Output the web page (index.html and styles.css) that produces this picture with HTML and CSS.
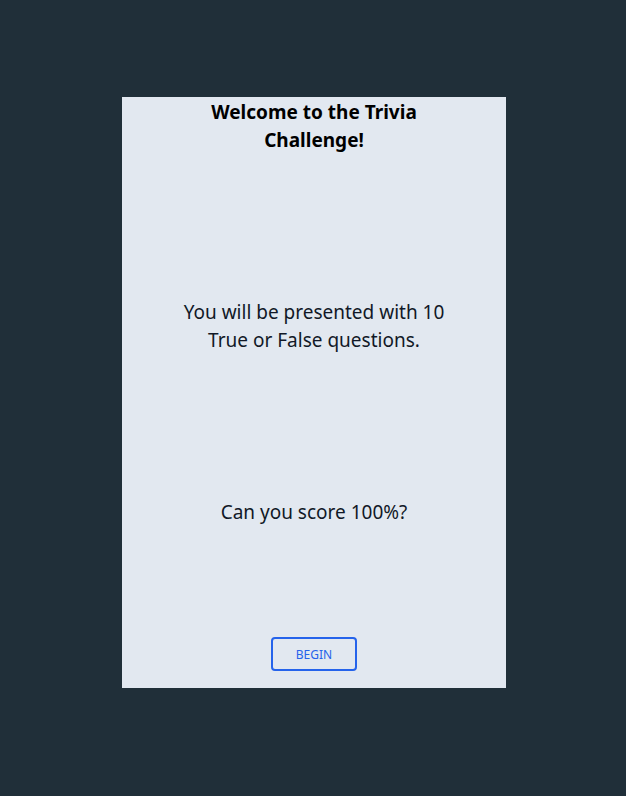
FILE: index.html
```html
<!DOCTYPE html>
<html>
<head>
<meta charset="utf-8">
<link rel="stylesheet" href="styles.css">
</head>
<body>
<main class="card">
  <h1 class="title">Welcome to the Trivia Challenge!</h1>
  <p class="text first">You will be presented with 10 True or False questions.</p>
  <p class="text second">Can you score 100%?</p>
  <button class="begin">BEGIN</button>
</main>
</body>
</html>
```
FILE: styles.css
```css
html, body {
  margin: 0;
  padding: 0;
  background: #202f39;
  height: 100%;
}
body {
  padding-top: 97px;
  box-sizing: border-box;
  font-family: "Noto Sans", "Open Sans", sans-serif;
}
.card {
  width: 384px;
  height: 591px;
  margin: 0 0 0 122px;
  padding-top: 1px;
  background: #e2e8f0;
  display: flex;
  flex-direction: column;
  align-items: center;
  box-sizing: border-box;
}
.title {
  margin: 0;
  width: 240px;
  font-size: 19px;
  line-height: 28px;
  font-weight: 700;
  text-align: center;
  color: #000;
}
.text {
  margin: 0;
  font-size: 19px;
  line-height: 28px;
  text-align: center;
  color: #111827;
}
.first {
  width: 280px;
  margin-top: 144px;
}
.second {
  margin-top: 144px;
}
.begin {
  margin-top: 111px;
  width: 86px;
  height: 34px;
  background: transparent;
  border: 2px solid #2563eb;
  border-radius: 4px;
  color: #2563eb;
  font-family: inherit;
  font-size: 12px;
  padding: 0;
  cursor: pointer;
}
```
